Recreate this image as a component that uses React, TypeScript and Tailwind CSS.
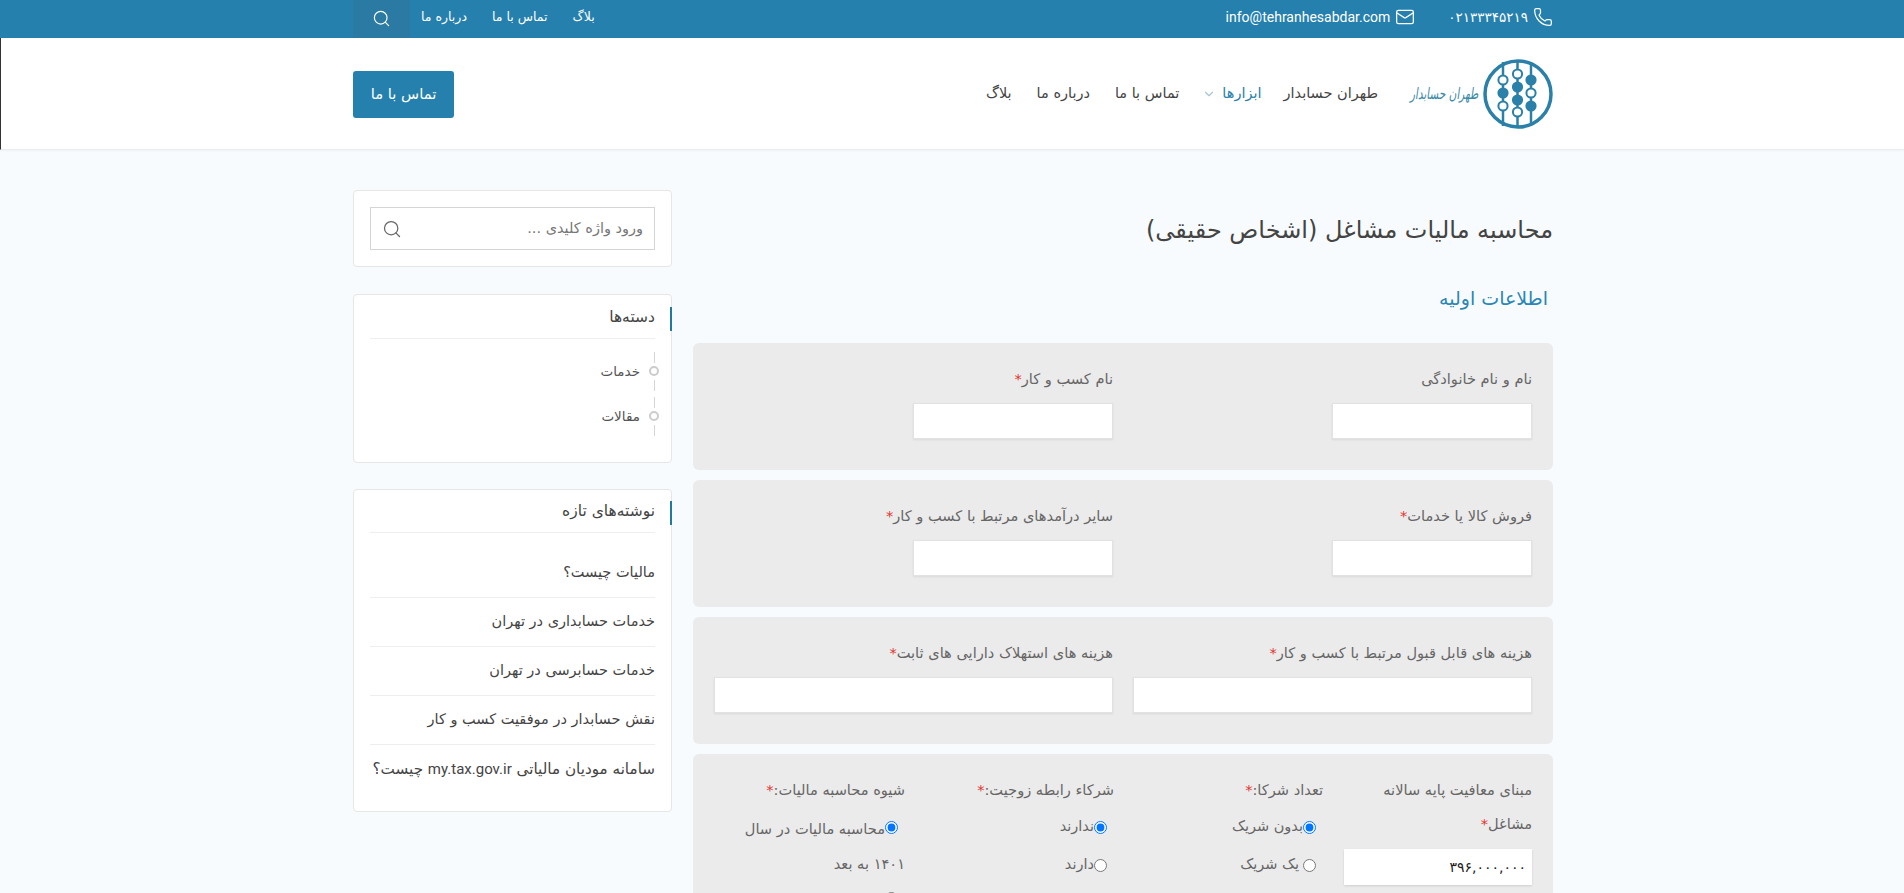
import React from "react";
import { Search, Phone, Mail, ChevronDown } from "lucide-react";

const font = { fontFamily: '"DejaVu Sans", sans-serif' };
const latin = "font-['Roboto',sans-serif]";

function Logo() {
  const c = "#2a80a8";
  const beads: [number, number, boolean][] = [
    [20, 21, false], [20, 34, true], [20, 47, false],
    [34.5, 15, false], [34.5, 28, true], [34.5, 41, true], [34.5, 53, false],
    [48, 21, true], [48, 34, false], [48, 47, true],
  ];
  return (
    <svg width="70" height="70" viewBox="0 0 70 70" className="h-[70px] w-[70px] shrink-0" fill="none" aria-hidden>
      <circle cx="35" cy="35" r="33" stroke={c} strokeWidth="3.5" />
      {[20, 34.5, 48].map((x) => (
        <line key={x} x1={x} x2={x} y1="3" y2="67" stroke={c} strokeWidth="2.5" />
      ))}
      {beads.map(([x, y, f], i) => (
        <circle key={i} cx={x} cy={y} r="4.6" fill={f ? c : "#fff"} stroke={c} strokeWidth="2" />
      ))}
    </svg>
  );
}

function Field({ label, star = true, wide = false }: { label: string; star?: boolean; wide?: boolean }) {
  return (
    <div className="flex-1">
      <div className="h-[22px] text-[14.6px] leading-[22px] text-[#666]">
        {label}
        {star && <span className="text-[#e3342f]">*</span>}
      </div>
      <input
        type="text"
        className={`mt-[13px] block h-[36px] border border-[#e2e2e2] bg-white shadow-[0_1px_2px_rgba(0,0,0,0.08)] ${wide ? "w-full" : "w-[200px]"}`}
      />
    </div>
  );
}

function Panel({ children }: { children: React.ReactNode }) {
  return (
    <div className="mb-[10px] flex h-[127px] gap-[20px] rounded-[6px] bg-[#ebebeb] px-[21px] pt-[25px]">{children}</div>
  );
}

function Radio({ label, checked = false, gap = false }: { label: string; checked?: boolean; gap?: boolean }) {
  return (
    <label className="flex h-[38px] items-center pr-[7px] text-[14.5px] text-[#666]">
      <input type="radio" defaultChecked={checked} className="m-0 h-[13px] w-[13px] accent-[#0075ff]" />
      <span className={gap ? "mr-[4px]" : ""}>{label}</span>
    </label>
  );
}

function SideTitle({ children }: { children: React.ReactNode }) {
  return (
    <div className="relative mx-[16px] flex h-[43px] items-center border-b border-[#eeeeee] pt-[2px] text-[15.5px] text-[#444]">
      {children}
      <span className="absolute -right-[17px] top-[11px] h-[24px] w-[2px] bg-[#1f7a9c]" />
    </div>
  );
}

function Cat({ label }: { label: string }) {
  return (
    <div className="relative flex h-[45px] items-center pr-[31px] text-[13.5px] text-[#555]">
      <span className="absolute right-[16px] top-[3px] h-[11px] w-px bg-[#d5d5d5]" />
      <span className="absolute right-[12px] top-[17px] h-[10px] w-[10px] rounded-full border-2 border-[#cccccc] bg-white" />
      <span className="absolute right-[16px] top-[31px] h-[11px] w-px bg-[#d5d5d5]" />
      {label}
    </div>
  );
}

export default function App() {
  const posts: React.ReactNode[] = [
    "مالیات چیست؟",
    "خدمات حسابداری در تهران",
    "خدمات حسابرسی در تهران",
    "نقش حسابدار در موفقیت کسب و کار",
    <span className="text-[15.2px]">
      سامانه مودیان مالیاتی <span className={`${latin} text-[15px]`}>my.tax.gov.ir</span> چیست؟
    </span>,
  ];
  return (
    <div dir="rtl" style={font} className="h-[893px] overflow-hidden bg-[#f7fbfe]">
      <div className="h-[38px] bg-[#2580ad] text-white">
        <div className="mr-[351px] flex h-full w-[1200px] items-center justify-between">
          <div className="flex items-center gap-[33px] pb-[4px]">
            <span className="flex items-center gap-[5px] text-[13.5px]">
              <Phone size={20} strokeWidth={1.5} />
              ۰۲۱۳۳۳۴۵۲۱۹
            </span>
            <span className={`flex items-center gap-[5px] text-[14px] ${latin}`}>
              <Mail size={20} strokeWidth={1.5} />
              info@tehranhesabdar.com
            </span>
          </div>
          <div className="flex h-full items-center text-[12.5px]">
            <span className="pb-[4px]">بلاگ</span>
            <span className="mr-[25px] pb-[4px]">تماس با ما</span>
            <span className="mr-[25px] pb-[4px]">درباره ما</span>
            <span className="mr-[11px] flex h-full w-[57px] items-center justify-center bg-[#2a7aa3] pb-[2px]">
              <Search size={19} strokeWidth={1.5} />
            </span>
          </div>
        </div>
      </div>

      <div className="h-[112px] border-b border-l border-b-[#ececec] border-l-[#333] bg-white shadow-[0_1px_3px_rgba(0,0,0,0.04)]">
        <div className="mr-[351px] flex h-full w-[1200px] items-center justify-between">
          <div className="flex items-center">
            <Logo />
            <span className="mr-[4px] w-[68px] -skew-x-12 scale-y-150 whitespace-nowrap text-[10.5px] text-[#3a8aa8]">طهران حسابدار</span>
            <nav className="mr-[33px] flex items-center text-[14.5px] text-[#444]">
              <span>طهران حسابدار</span>
              <span className="mr-[22px] text-[#2a80a8]">ابزارها</span>
              <ChevronDown size={14} className="mr-[6px] text-[#a9c6d3]" />
              <span className="mr-[23px]">تماس با ما</span>
              <span className="mr-[25px]">درباره ما</span>
              <span className="mr-[25px]">بلاگ</span>
            </nav>
          </div>
          <button className="mt-[1px] h-[47px] w-[101px] rounded-[3px] bg-[#2580ad] text-[14.8px] text-white">تماس با ما</button>
        </div>
      </div>

      <div className="mr-[351px] flex w-[1200px] gap-[21px] pt-[40px]">
        <main className="w-[860px] shrink-0">
          <h1 className="mt-[17px] h-[46px] text-[24px] leading-[46px] text-[#444]">
            محاسبه مالیات مشاغل (اشخاص حقیقی)
          </h1>
          <h2 className="mr-[5px] mt-[27px] h-[36px] text-[19px] leading-[36px] text-[#2a86b4]">اطلاعات اولیه</h2>
          <div className="mt-[27px]">
            <Panel>
              <Field label="نام و نام خانوادگی" star={false} />
              <Field label="نام کسب و کار" />
            </Panel>
            <Panel>
              <Field label="فروش کالا یا خدمات" />
              <Field label="سایر درآمدهای مرتبط با کسب و کار" />
            </Panel>
            <Panel>
              <Field label="هزینه های قابل قبول مرتبط با کسب و کار" wide />
              <Field label="هزینه های استهلاک دارایی های ثابت" wide />
            </Panel>
            <div className="flex h-[300px] rounded-[6px] bg-[#ebebeb] px-[21px] pt-[19px] text-[14.6px] text-[#666]">
              <div className="w-[209px] pl-[9px]">
                <div className="leading-[34px]">
                  مبنای معافیت پایه سالانه
                  <br />
                  مشاغل<span className="text-[#e3342f]">*</span>
                </div>
                <input
                  readOnly
                  value="۳۹۶,۰۰۰,۰۰۰"
                  className="mt-[8px] block h-[36px] w-[188px] bg-white px-[6px] text-[14px] text-[#222] shadow-[0_1px_2px_rgba(0,0,0,0.12)]"
                />
              </div>
              <div className="w-[209px]">
                <div className="h-[35px] leading-[34px]">
                  تعداد شرکا:<span className="text-[#e3342f]">*</span>
                </div>
                <Radio label="بدون شریک" checked />
                <Radio label="یک شریک" gap />
              </div>
              <div className="w-[209px]">
                <div className="h-[35px] leading-[34px]">
                  شرکاء رابطه زوجیت:<span className="text-[#e3342f]">*</span>
                </div>
                <Radio label="ندارند" checked />
                <Radio label="دارند" />
              </div>
              <div className="w-[191px]">
                <div className="h-[34px] leading-[34px]">
                  شیوه محاسبه مالیات:<span className="text-[#e3342f]">*</span>
                </div>
                <label className="block pt-[4px] leading-[35px]">
                  <input type="radio" defaultChecked className="mr-[7px] h-[13px] w-[13px] accent-[#0075ff]" />
                  محاسبه مالیات در سال
                  <br />
                  ۱۴۰۱ به بعد
                </label>
                <label className="block leading-[38px]">
                  <input type="radio" className="mr-[7px] h-[13px] w-[13px] accent-[#0075ff]" />
                </label>
              </div>
            </div>
          </div>
        </main>

        <aside className="w-[319px] shrink-0">
          <div className="rounded-[4px] border border-[#e6e6e6] bg-white px-[16px] py-[16px]">
            <div className="flex h-[43px] items-center justify-between border border-[#d5d5d5] px-[11px] text-[14.5px] text-[#777]">
              <span>ورود واژه کلیدی ...</span>
              <Search size={20} strokeWidth={1.5} className="text-[#666]" />
            </div>
          </div>
          <div className="mt-[27px] h-[169px] rounded-[4px] border border-[#e6e6e6] bg-white">
            <div className="pt-[1px]">
              <SideTitle>دسته‌ها</SideTitle>
            </div>
            <div className="mt-[10px]">
              <Cat label="خدمات" />
              <Cat label="مقالات" />
            </div>
          </div>
          <div className="mt-[26px] h-[323px] rounded-[4px] border border-[#e6e6e6] bg-white">
            <SideTitle>نوشته‌های تازه</SideTitle>
            <div className="mx-[16px] mt-[16px]">
              {posts.map((p, i) => (
                <div
                  key={i}
                  className={`flex h-[49px] items-center text-[14.5px] text-[#444] ${i < posts.length - 1 ? "border-b border-[#eeeeee]" : ""}`}
                >
                  <span>{p}</span>
                </div>
              ))}
            </div>
          </div>
        </aside>
      </div>
    </div>
  );
}
